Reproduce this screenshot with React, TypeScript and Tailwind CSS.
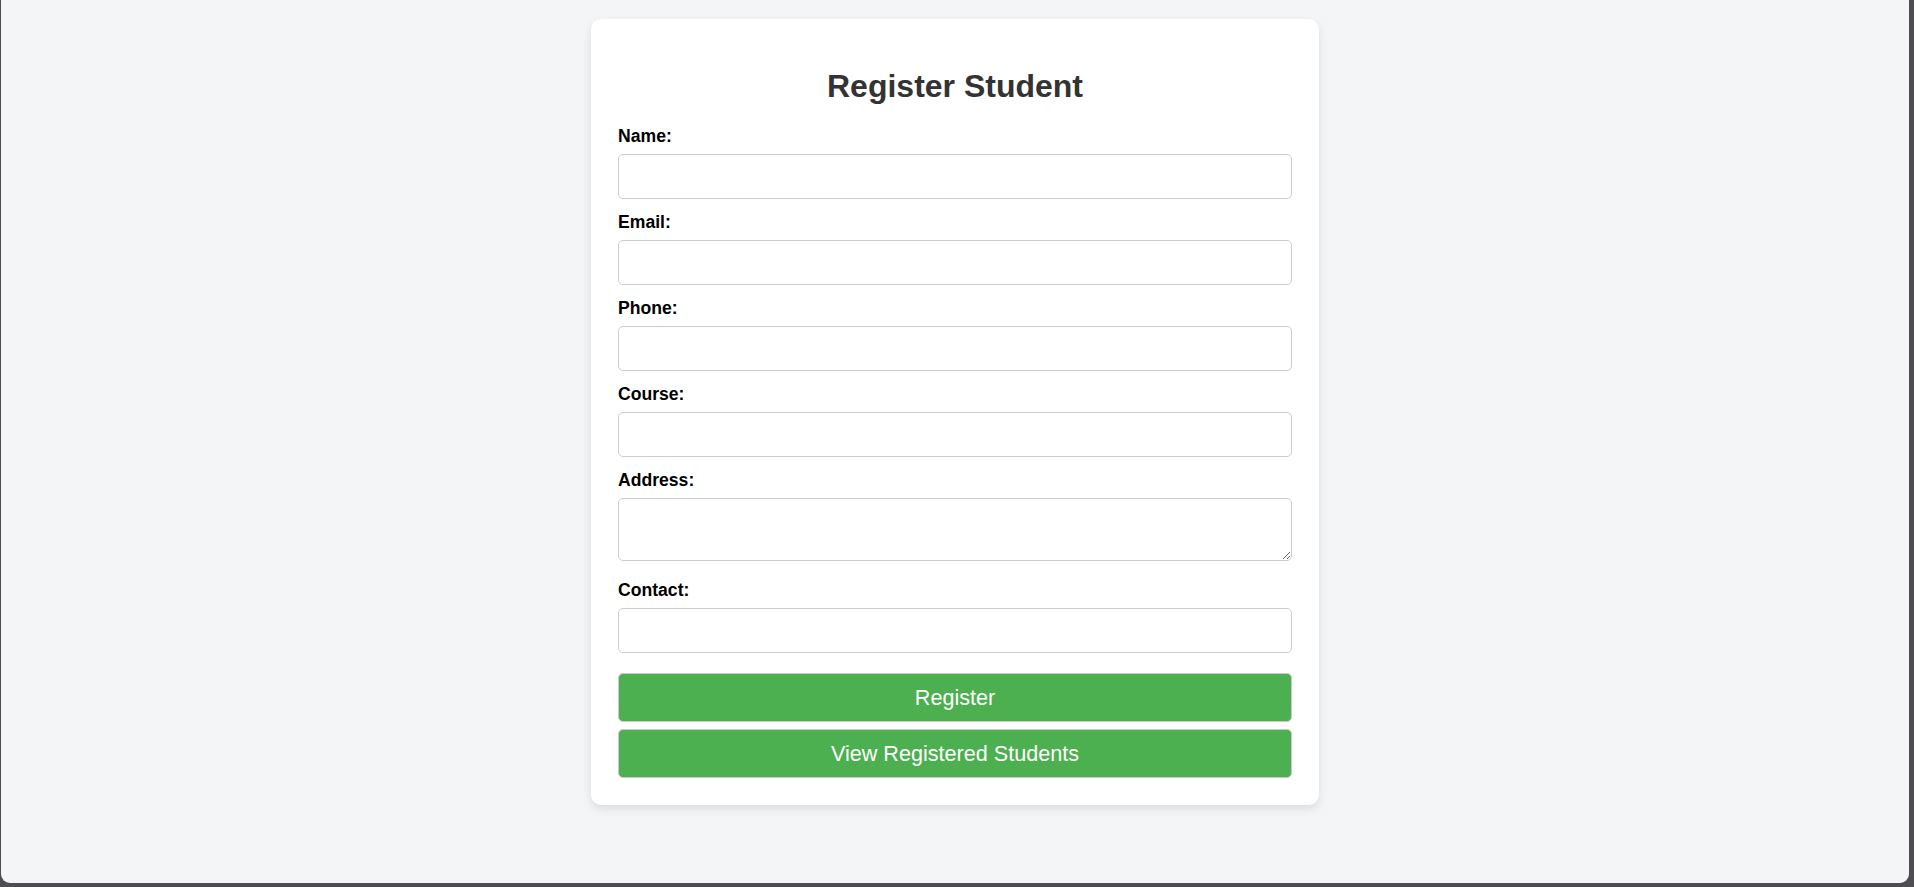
import React from "react";

const fields = [
  { label: "Name:", type: "text" },
  { label: "Email:", type: "email" },
  { label: "Phone:", type: "text" },
  { label: "Course:", type: "text" },
];

export default function App() {
  return (
    <div className="h-[887px] w-full bg-[#4d4d52] pl-px pr-[5px] pb-[4px]" style={{ fontFamily: '"Liberation Sans", Arial, sans-serif' }}>
      <div className="h-full w-full rounded-b-[9px] bg-[#f4f5f7] flex justify-center pt-[19px]">
        <div className="w-[728px] h-fit bg-white rounded-[10px] p-[27px] shadow-[0_4px_10px_rgba(0,0,0,0.1)]">
          <h2 className="mt-[22px] mb-[21px] text-center text-[32px] leading-[37px] font-bold text-[#333]">Register Student</h2>
          <form className="flex flex-col" onSubmit={(e) => e.preventDefault()}>
            {fields.map((f) => (
              <div key={f.label} className="flex flex-col">
                <label className="block text-[17.6px] leading-[20px] font-bold text-black mb-2">{f.label}</label>
                <input type={f.type} className="block w-full h-[45px] border border-[#ccc] rounded-[5px] px-3 mb-[13px] bg-white outline-none" />
              </div>
            ))}
            <div className="flex flex-col">
              <label className="block text-[17.6px] leading-[20px] font-bold text-black mb-2">Address:</label>
              <textarea rows={2} className="block w-full h-[63px] border border-[#ccc] rounded-[5px] px-3 py-3 mb-[19px] bg-white outline-none resize-y" />
            </div>
            <div className="flex flex-col">
              <label className="block text-[17.6px] leading-[20px] font-bold text-black mb-2">Contact:</label>
              <input type="text" className="block w-full h-[45px] border border-[#ccc] rounded-[5px] px-3 bg-white outline-none" />
            </div>
            <button type="submit" className="mt-[20px] h-[49px] w-full rounded-[5px] border border-[#c9c9c9] bg-[#4caf50] text-white text-[21.6px] leading-none">Register</button>
            <button type="button" className="mt-[7px] h-[49px] w-full rounded-[5px] border border-[#c9c9c9] bg-[#4caf50] text-white text-[21.6px] leading-none">View Registered Students</button>
          </form>
        </div>
      </div>
    </div>
  );
}
